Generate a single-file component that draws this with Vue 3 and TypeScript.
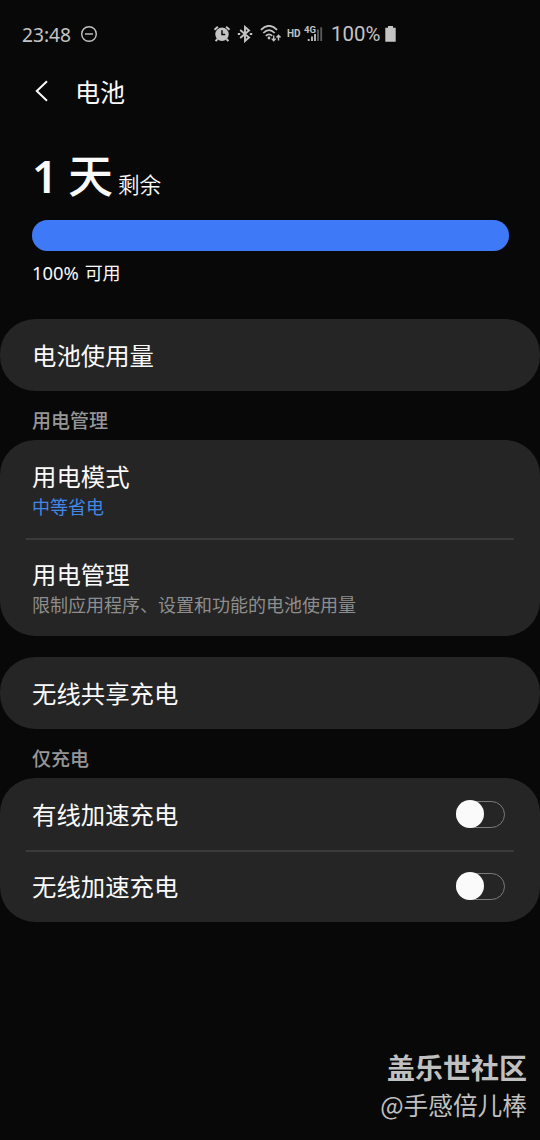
<template>
  <div class="battery-page">
    <header class="status-bar">
      <span class="clock">23:48</span>
      <svg class="dnd" width="18" height="18" viewBox="0 0 18 18">
        <circle cx="9" cy="9" r="7.3" />
        <path d="M5 9h8" />
      </svg>
      <div class="status-icons">
        <!-- alarm -->
        <svg width="18" height="18" viewBox="0 0 18 18">
          <circle cx="9" cy="9.2" r="6.7" fill="#c4c4c4" />
          <path d="M1.5 4.8 4.9 1.7M16.5 4.8 13.1 1.7M4.5 14 2.6 16.2M13.5 14l1.9 2.2" stroke="#c4c4c4" stroke-width="2" />
          <path d="M9 5.2v4.3h3.2" fill="none" stroke="#080808" stroke-width="1.5" />
        </svg>
        <!-- bluetooth -->
        <svg class="bluetooth" width="16" height="18" viewBox="0 0 16 18">
          <path d="M3.2 5 12 12.5 8 16V2l4 3.5L3.2 13" fill="none" stroke="#c4c4c4" stroke-width="1.9" />
          <path d="M.8 9h2.4M12.8 9h2.4" stroke="#c4c4c4" stroke-width="2.2" />
        </svg>
        <!-- wifi with traffic arrows -->
        <svg class="wifi" width="22" height="18" viewBox="0 0 22 18">
          <g fill="none" stroke="#c4c4c4" stroke-width="1.7">
            <path d="M.9 4.8Q9 -3.2 17.1 4.8" />
            <path d="M3.3 8Q9 2.4 14.7 8" />
            <path d="M5.8 10.8Q9 7.8 12.2 10.8" />
          </g>
          <circle cx="9" cy="13" r="1.4" fill="#c4c4c4" />
          <path d="M13.7 10.5v5.3M11.7 13.6l2 2.2 2-2.2M18.5 15.5v-5.2M16.5 12.5l2-2.2 2 2.2" fill="none" stroke="#c4c4c4" stroke-width="1.4" />
        </svg>
        <span class="hd">HD</span>
        <svg class="signal" width="20" height="20" viewBox="0 0 20 20">
          <text x="0" y="8.5">4G</text>
          <path d="M4.7 15v2M8 12.5V17M11 10v7" stroke="#c4c4c4" stroke-width="1.8" />
          <path d="M14 5.5V17M17.2 3.2V17" stroke="#5c5c5c" stroke-width="1.8" />
        </svg>
        <span class="level">100%</span>
        <svg class="cell" width="12" height="18" viewBox="0 0 12 18">
          <path d="M.3 2.7H3V1h5v1.7h2.7v14H.3z" fill="#c4c4c4" />
        </svg>
      </div>
    </header>

    <nav class="title-bar">
      <svg width="14" height="22" viewBox="0 0 14 22">
        <path d="M13 1.3 2.8 11 13 20.7" fill="none" stroke="#fafafa" stroke-width="2" />
      </svg>
      <h1>电池</h1>
    </nav>

    <section class="summary">
      <div class="remaining">
        <span class="digit">1</span>
        <span class="day">天</span>
        <span class="left">剩余</span>
      </div>
      <div class="bar">
        <div class="bar-fill" :style="{ width: level + '%' }"></div>
      </div>
      <div class="available">{{ level }}% <span>可用</span></div>
    </section>

    <template v-for="(group, index) in groups" :key="index">
      <h2 v-if="group.header" class="group-header">{{ group.header }}</h2>
      <div class="card" :class="{ spaced: group.spaced }">
        <div
          v-for="item in group.items"
          :key="item.label"
          class="row"
          :class="{ tall: item.note }"
          @click="toggle(item)"
        >
          <div class="row-text">
            <div class="label">{{ item.label }}</div>
            <div v-if="item.note" class="note" :class="{ active: item.active }">{{ item.note }}</div>
          </div>
          <div v-if="item.on !== undefined" class="switch" :class="{ on: item.on }">
            <div class="thumb"></div>
          </div>
        </div>
      </div>
    </template>

    <footer class="signature">
      <div class="community">盖乐世社区</div>
      <div class="author">@手感倍儿棒</div>
    </footer>
  </div>
</template>

<script setup lang="ts">
import { ref } from 'vue'

interface Item {
  label: string
  note?: string
  active?: boolean
  on?: boolean
}

interface Group {
  header?: string
  spaced?: boolean
  items: Item[]
}

const level = ref(100)

const groups = ref<Group[]>([
  { items: [{ label: '电池使用量' }] },
  {
    header: '用电管理',
    items: [
      { label: '用电模式', note: '中等省电', active: true },
      { label: '用电管理', note: '限制应用程序、设置和功能的电池使用量' }
    ]
  },
  { spaced: true, items: [{ label: '无线共享充电' }] },
  {
    header: '仅充电',
    items: [
      { label: '有线加速充电', on: false },
      { label: '无线加速充电', on: false }
    ]
  }
])

function toggle(item: Item) {
  if (item.on !== undefined) {
    item.on = !item.on
  }
}
</script>

<style>
body {
  margin: 0;
  background: #080808;
}
</style>

<style scoped>
.battery-page {
  display: flex;
  flex-direction: column;
  width: 540px;
  height: 1140px;
  box-sizing: border-box;
  overflow: hidden;
  background: #080808;
  color: #fafafa;
  font-family: "Noto Sans CJK SC", sans-serif;
}

.status-bar {
  display: flex;
  align-items: center;
  height: 68px;
  padding-left: 22px;
  color: #c4c4c4;
  flex-shrink: 0;
}

.clock {
  width: 58px;
  font: 19.2px "Noto Sans", sans-serif;
}

.dnd {
  fill: none;
  stroke: #c4c4c4;
  stroke-width: 1.4;
}

.status-icons {
  display: flex;
  align-items: center;
  margin-left: 115px;
}

.bluetooth {
  margin-left: 6px;
}

.wifi {
  margin-left: 7px;
}

.hd {
  width: 17px;
  margin-left: 5px;
  font: bold 10px/16px Roboto, sans-serif;
  padding-bottom: 1px;
}

.signal text {
  font: bold 9.5px Roboto, sans-serif;
  fill: #c4c4c4;
}

.level {
  width: 53px;
  margin-left: 7px;
  font: 20.4px Roboto, sans-serif;
}

.cell {
  margin-left: 1px;
}

.title-bar {
  display: flex;
  align-items: center;
  height: 46px;
  padding-left: 34px;
}

.title-bar h1 {
  margin: 0 0 0 27px;
  font-size: 25px;
  font-weight: 400;
  line-height: 46px;
}

.summary {
  height: 205px;
  padding: 0 32px;
}

.remaining {
  display: flex;
  align-items: baseline;
  height: 105.5px;
  line-height: 120px;
}

.digit {
  width: 36px;
  font-family: "Noto Sans", sans-serif;
  font-size: 45px;
  font-weight: 600;
}

.day {
  width: 50px;
  font-size: 45px;
  font-weight: 500;
}

.left {
  font-size: 21.6px;
  font-weight: 350;
}

.bar {
  height: 31.5px;
  margin: 0 -0.5px;
  border-radius: 16px;
  background: #252525;
}

.bar-fill {
  height: 100%;
  border-radius: 16px;
  background: #3e7af7;
}

.available {
  margin-top: 9px;
  font: 18.4px/26px "Noto Sans", "Noto Sans CJK SC", sans-serif;
}

.available span {
  font-size: 18px;
  margin-left: 1px;
}

.card {
  border-radius: 35px;
  background: #252525;
}

.card.spaced {
  margin-top: 21px;
}

.row {
  display: flex;
  align-items: center;
  justify-content: space-between;
  height: 72px;
  margin: 0 26px;
  padding: 0 9px 0 6px;
  box-sizing: border-box;
}

.row.tall {
  height: 98px;
}

.row + .row {
  padding-bottom: 2px;
  border-top: 2px solid #3a3a3a;
}

.label {
  font-size: 24.4px;
  line-height: 34px;
}

.note {
  font-size: 18px;
  line-height: 27px;
  color: #8e8e8e;
}

.note.active {
  color: #4288e6;
}

.group-header {
  height: 49px;
  margin: 0;
  padding-left: 32px;
  font-size: 19px;
  font-weight: 500;
  line-height: 58px;
  color: #969696;
}

.switch {
  display: flex;
  align-items: center;
  width: 49px;
  height: 27px;
  box-sizing: border-box;
  border: 1.5px solid #7c7c7c;
  border-radius: 14px;
}

.switch.on {
  justify-content: flex-end;
  background: #3e7af7;
}

.thumb {
  flex-shrink: 0;
  width: 28px;
  height: 28px;
  margin: 0 -1px;
  border-radius: 50%;
  background: #fafafa;
}

.signature {
  margin-top: auto;
  padding: 0 13px 17px 0;
  text-align: right;
  color: #c0c0c0;
}

.community {
  font-size: 28px;
  font-weight: 700;
  line-height: 36px;
}

.author {
  font-size: 24.7px;
  line-height: 38px;
}
</style>
